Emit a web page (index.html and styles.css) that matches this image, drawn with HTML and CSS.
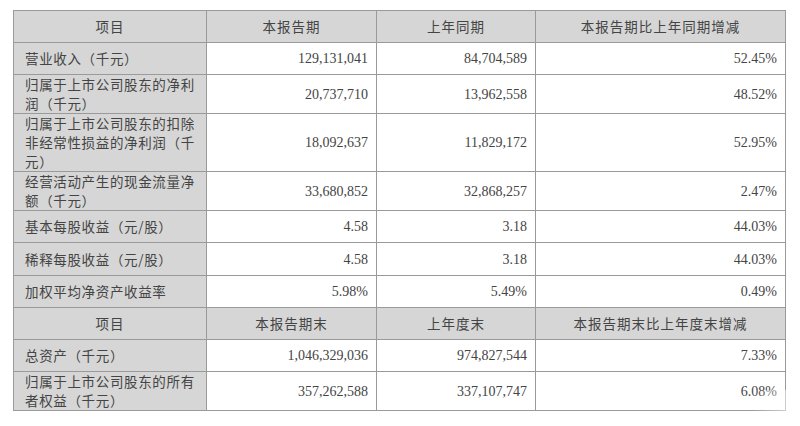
FILE: index.html
```html
<!DOCTYPE html>
<html lang="zh-CN">
<head>
<meta charset="utf-8">
<title>主要财务数据</title>
<link rel="stylesheet" href="styles.css">
</head>
<body>
<div class="page">
<table class="fin">
  <colgroup>
    <col class="c1"><col class="c2"><col class="c3"><col class="c4">
  </colgroup>
  <tr class="head h32"><td>项目</td><td>本报告期</td><td>上年同期</td><td>本报告期比上年同期增减</td></tr>
  <tr class="h32"><td class="lbl">营业收入（千元）</td><td class="num">129,131,041</td><td class="num">84,704,589</td><td class="num">52.45%</td></tr>
  <tr class="h39"><td class="lbl">归属于上市公司股东的净利润（千元）</td><td class="num">20,737,710</td><td class="num">13,962,558</td><td class="num">48.52%</td></tr>
  <tr class="h58"><td class="lbl">归属于上市公司股东的扣除非经常性损益的净利润（千元）</td><td class="num">18,092,637</td><td class="num">11,829,172</td><td class="num">52.95%</td></tr>
  <tr class="h39"><td class="lbl">经营活动产生的现金流量净额（千元）</td><td class="num">33,680,852</td><td class="num">32,868,257</td><td class="num">2.47%</td></tr>
  <tr class="h32"><td class="lbl">基本每股收益（元/股）</td><td class="num">4.58</td><td class="num">3.18</td><td class="num">44.03%</td></tr>
  <tr class="h33"><td class="lbl">稀释每股收益（元/股）</td><td class="num">4.58</td><td class="num">3.18</td><td class="num">44.03%</td></tr>
  <tr class="h32"><td class="lbl">加权平均净资产收益率</td><td class="num">5.98%</td><td class="num">5.49%</td><td class="num">0.49%</td></tr>
  <tr class="head h32"><td>项目</td><td>本报告期末</td><td>上年度末</td><td>本报告期末比上年度末增减</td></tr>
  <tr class="h32"><td class="lbl">总资产（千元）</td><td class="num">1,046,329,036</td><td class="num">974,827,544</td><td class="num">7.33%</td></tr>
  <tr class="h39"><td class="lbl">归属于上市公司股东的所有者权益（千元）</td><td class="num">357,262,588</td><td class="num">337,107,747</td><td class="num">6.08%</td></tr>
</table>
<div class="mark" aria-hidden="true"></div>
</div>
</body>
</html>
```

FILE: styles.css
```css
html, body {
  margin: 0;
  padding: 0;
  background: #ffffff;
}
.page {
  position: relative;
  width: 800px;
  height: 426px;
  padding: 10px 0 0 13px;
  box-sizing: border-box;
}
.fin {
  border-collapse: collapse;
  table-layout: fixed;
  width: 772px;
  color: #444444;
}
.c1 { width: 193px; }
.c2 { width: 170px; }
.c3 { width: 159px; }
.c4 { width: 250px; }
.fin td {
  border: 1px solid #9a9a9a;
  padding: 0 8px 0 12px;
  line-height: 19px;
  font-size: 14px;
  vertical-align: middle;
  overflow: hidden;
}
.head td {
  background: #d6d6d6;
  text-align: center;
  font-family: "Noto Sans CJK SC", "Noto Sans", sans-serif;
  font-size: 13.5px;
  letter-spacing: 1px;
  padding: 0 4px;
}
.fin td.lbl {
  background: #d6d6d6;
  font-family: "Noto Sans CJK SC", "Noto Sans", sans-serif;
  font-size: 13.5px;
  letter-spacing: 0.65px;
  word-break: break-all;
  padding: 0 0 0 11px;
}
.num {
  text-align: right;
  font-family: "Liberation Serif", "Times New Roman", serif;
  font-size: 14.5px;
  background: #ffffff;
}
.h32 { height: 32px; }
.h33 { height: 33px; }
.h39 { height: 39px; }
.h58 { height: 58px; }
.mark {
  position: absolute;
  left: 752px;
  top: 390px;
  width: 48px;
  height: 22px;
  background: linear-gradient(90deg, rgba(255,255,255,0), rgba(255,255,255,0.7));
}
```
